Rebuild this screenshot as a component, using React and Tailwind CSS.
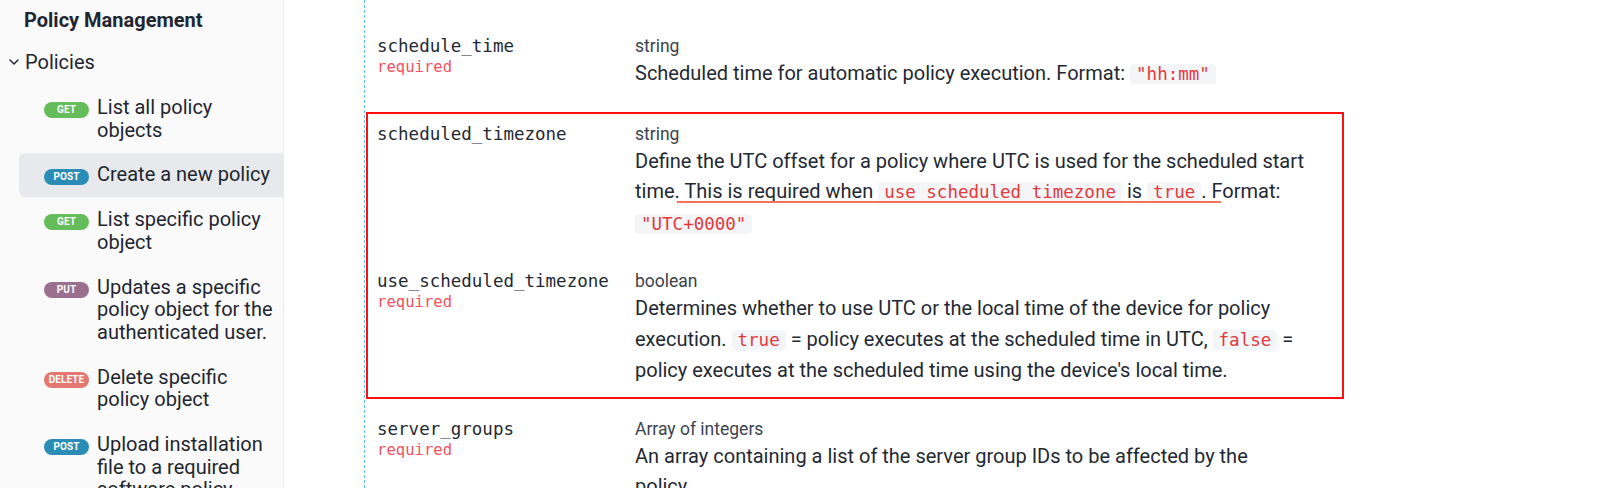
import React from "react";

const badgeCls = {
  GET: "bg-[#64bd5a]",
  POST: "bg-[#2b8db5]",
  PUT: "bg-[#9b6f8f]",
  DELETE: "bg-[#e57771]",
};

const navItems = [
  { m: "GET", lines: ["List all policy", "objects"] },
  { m: "POST", lines: ["Create a new policy"], active: true },
  { m: "GET", lines: ["List specific policy", "object"] },
  { m: "PUT", lines: ["Updates a specific", "policy object for the", "authenticated user."] },
  { m: "DELETE", lines: ["Delete specific", "policy object"] },
  { m: "POST", lines: ["Upload installation", "file to a required", "software policy"] },
];

function Code({ children }) {
  return (
    <span className="font-['DejaVu_Sans_Mono',monospace] text-[17.5px] text-[#e1393d] bg-[#f4f5f7] rounded-[4px] px-[6px]">
      {children}
    </span>
  );
}

function Row({ name, required, type, children, className = "" }) {
  return (
    <div className={"flex " + className}>
      <div className="w-[258px] shrink-0">
        <div className="font-['DejaVu_Sans_Mono',monospace] text-[17.5px] leading-[20px] text-[#1f2933]">
          {name}
        </div>
        {required && (
          <div className="font-['DejaVu_Sans_Mono',monospace] text-[15.6px] leading-[22px] text-[#f2525f]">
            required
          </div>
        )}
      </div>
      <div className="flex-1">
        <div className="text-[17.5px] leading-[20px] text-[#3b424d]">{type}</div>
        <div className="mt-[2px] text-[20px] leading-[30.5px] text-[#1f2933]">{children}</div>
      </div>
    </div>
  );
}

export default function App() {
  return (
    <div className="w-[1600px] h-[488px] overflow-hidden flex bg-white font-['Roboto',sans-serif]">
      {/* Sidebar */}
      <div className="w-[284px] shrink-0 h-full bg-[#fafafa] border-r border-[#e9ebee] text-[#1f2630]">
        <div className="pt-[8px] pl-[24px] text-[20px] leading-[24px] font-bold">Policy Management</div>
        <div className="mt-[18px] flex items-center text-[20px] leading-[24px]">
          <svg className="ml-[9px] w-[10px] h-[6px]" viewBox="0 0 10 6" fill="none">
            <path d="M1 1 L5 5 L9 1" stroke="#1f2630" strokeWidth="1.5" strokeLinecap="round" strokeLinejoin="round" />
          </svg>
          <span className="ml-[6px]">Policies</span>
        </div>
        <div className="mt-[11.5px] ml-[19px] flex flex-col gap-[1px]">
          {navItems.map((it, i) => (
            <div
              key={i}
              className={
                "flex items-start pl-[25px] py-[10.5px] rounded-l-[6px] " +
                (it.active ? "bg-[#e8e9ec]" : "")
              }
            >
              <span
                className={
                  "mt-[6px] w-[45px] h-[16px] shrink-0 rounded-full flex items-center justify-center text-white text-[10px] font-bold tracking-[0.01em] leading-none " +
                  badgeCls[it.m]
                }
              >
                {it.m}
              </span>
              <div className="ml-[8px] text-[20px] leading-[22.7px] whitespace-nowrap">
                {it.lines.map((l, j) => (
                  <div key={j}>{l}</div>
                ))}
              </div>
            </div>
          ))}
        </div>
      </div>

      {/* Main */}
      <div className="flex-1 h-full">
        <div className="ml-[80px] h-full border-l border-dashed border-[#5fc2ee] pt-[36px]">
          <Row name="schedule_time" required type="string" className="pl-[12px]">
            <div className="whitespace-nowrap">
              Scheduled time for automatic policy execution. Format: <Code>"hh:mm"</Code>
            </div>
          </Row>

          <div className="mt-[22px] ml-[1px] w-[978px] border-2 border-[#ff1010] pt-[10px] pb-[11px]">
            <Row name="scheduled_timezone" type="string" className="pl-[9px]">
              <div className="whitespace-nowrap">
                Define the UTC offset for a policy where UTC is used for the scheduled start
              </div>
              <div className="relative whitespace-nowrap">
                time. This is required when <Code>use_scheduled_timezone</Code> is <Code>true</Code>. Format:
                <span className="absolute left-[42px] top-[25px] w-[544px] h-[2px] bg-[#f7705f]" />
              </div>
              <div className="whitespace-nowrap">
                <Code>"UTC+0000"</Code>
              </div>
            </Row>
            <Row name="use_scheduled_timezone" required type="boolean" className="pl-[9px] mt-[32px]">
              <div className="whitespace-nowrap">
                Determines whether to use UTC or the local time of the device for policy
              </div>
              <div className="whitespace-nowrap">
                execution. <Code>true</Code> = policy executes at the scheduled time in UTC, <Code>false</Code> =
              </div>
              <div className="whitespace-nowrap">
                policy executes at the scheduled time using the device's local time.
              </div>
            </Row>
          </div>

          <Row name="server_groups" required type="Array of integers" className="pl-[12px] mt-[20px]">
            <div className="whitespace-nowrap">
              An array containing a list of the server group IDs to be affected by the
            </div>
            <div className="whitespace-nowrap">policy.</div>
          </Row>
        </div>
      </div>
    </div>
  );
}
